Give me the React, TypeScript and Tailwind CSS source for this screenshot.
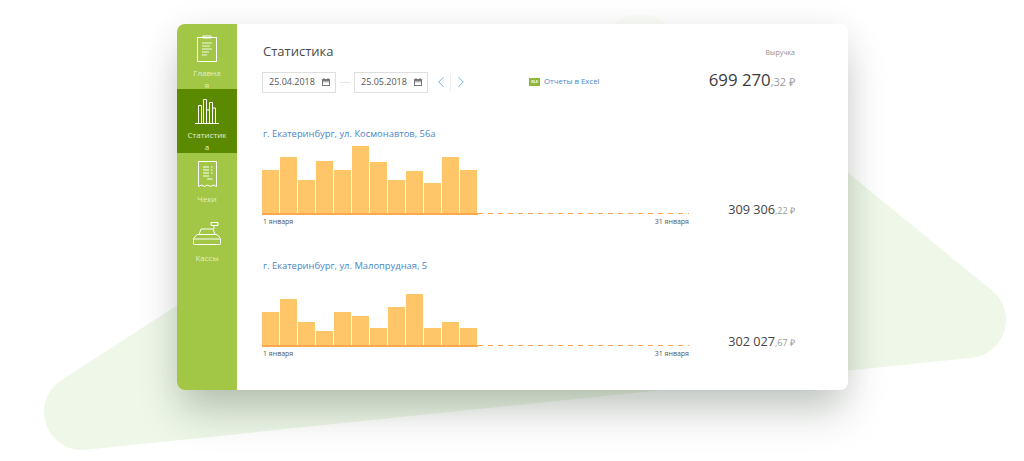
import { ChevronLeft, ChevronRight } from "lucide-react";

const FIRST = [43, 56, 33, 52, 43, 67, 51, 33, 42, 30, 56, 43];
const SECOND = [33, 46, 23, 14, 33, 29, 17, 38, 51, 17, 23, 17];

const ClipboardIcon = () => (
  <svg width="20" height="27" viewBox="0 0 20 27" fill="none" stroke="#fff" strokeWidth="1">
    <rect x="0.5" y="2.5" width="19" height="24" />
    <path d="M6 2.5V1h8v1.5M6 3h8" />
    <path d="M5 8h10M5 11h8M5 14h10M5 17h7M5 20h5" strokeWidth="1.2" opacity="0.85" />
  </svg>
);

const ChartIcon = () => (
  <svg width="24" height="26" viewBox="0 0 24 26" fill="none" stroke="#fff" strokeWidth="1">
    <path d="M0 25.5h24" />
    <path d="M3.5 25V7.5h3V25M8.5 25V1.5h3V25M11.500 25V12h3V25M14.500 25V4.500h3V25M17.500 25V10h3V25" />
  </svg>
);

const ReceiptIcon = () => (
  <svg width="19" height="27" viewBox="0 0 19 27" fill="none" stroke="#fff" strokeWidth="1">
    <path d="M0.500 0.500h18v25l-3-1.500-3 1.500-3-1.500-3 1.500-3-1.500-3 1.500z" />
    <path d="M5 6h6M5 9h6M5 12h6M5 15h6M13 6h1.500M13 9h1.500M13 12h1.500M9 18h5.500" strokeWidth="1.200" />
  </svg>
);

const RegisterIcon = () => (
  <svg width="28" height="23" viewBox="0 0 28 23" fill="none" stroke="#fff" strokeWidth="1">
    <path d="M1.500 22.500h25a1 1 0 0 0 1-1v-5l-3.500-4h-20l-3.500 4v5a1 1 0 0 0 1 1z" />
    <path d="M0.500 17h27" />
    <path d="M6 12.500l2-5.500h12l2 5.500" />
    <path d="M21 7V3.500M18 0.500h7v3h-7z" />
  </svg>
);

const CalendarIcon = () => (
  <svg width="8" height="8" viewBox="0 0 8 8" fill="#777">
    <path d="M0 1h1.500V0h1v1h3V0h1v1H8v7H0zM1 3v4h6V3z" />
    <path d="M1 3h6v1.500H1z" opacity="0.5" />
  </svg>
);

const DateField = ({ value }: { value: string }) => (
  <div className="flex h-[21px] w-[74px] items-center justify-between border border-[#dedede] pl-[6px] pr-[5px] text-[9px] text-[#555555]">
    <span>{value}</span>
    <CalendarIcon />
  </div>
);

const NavItem = ({
  label,
  icon,
  active,
  className,
}: {
  label: string;
  icon: React.ReactNode;
  active?: boolean;
  className: string;
}) => (
  <div
    className={`flex w-full flex-col items-center text-center text-[8px] leading-[12px] ${className} ${
      active ? "bg-[#5b8a00] text-[#e8f0d8]" : "text-[#e3efc4]"
    }`}
  >
    <div className="flex items-end">{icon}</div>
    <div className="mt-[5px] whitespace-pre-line">{label}</div>
  </div>
);

const Sales = ({
  title,
  bars,
  whole,
  cents,
  className,
}: {
  title: string;
  bars: number[];
  whole: string;
  cents: string;
  className: string;
}) => (
  <div className={className}>
    <div className="pl-px text-[9.400px] leading-[14px] text-[#4a86c8]">{title}</div>
    <div className="mt-[5px] flex items-end">
      <div className="w-[427px]">
        <div className="flex h-[67px] items-end gap-px">
          {bars.map((h, i) => (
            <div key={i} className="w-[17px] bg-[#ffc669]" style={{ height: h }} />
          ))}
        </div>
        <div className="flex h-[2px] items-start">
          <div className="h-[2px] w-[216px] bg-[#f9a94a]" />
          <div className="h-px w-[211px] bg-[repeating-linear-gradient(90deg,#f5a55a_0,#f5a55a_5px,transparent_5px,transparent_10px)]" />
        </div>
        <div className="mt-px flex justify-between pl-px text-[7px] leading-[12px] text-[#555555]">
          <span>1 января</span>
          <span>31 января</span>
        </div>
      </div>
      <div className="mb-[7px] flex-1 text-right text-[12.700px] leading-[20px] text-[#444444]">
        {whole}
        <span className="text-[9px] text-[#9a9a9a]">,{cents} ₽</span>
      </div>
    </div>
  </div>
);

export default function App() {
  return (
    <div className="relative h-[461px] w-[1024px] overflow-hidden bg-white font-['Open_Sans',sans-serif]">
      <svg className="absolute left-0 top-0" width="1024" height="461" viewBox="0 0 1024 461">
        <defs>
          <linearGradient id="fade" gradientUnits="userSpaceOnUse" x1="0" y1="14" x2="0" y2="170">
            <stop offset="0" stopColor="#fbfdf9" />
            <stop offset="1" stopColor="#eef7e8" />
          </linearGradient>
        </defs>
        <polygon
          points="82,412 968,320 640,52"
          fill="url(#fade)"
          stroke="url(#fade)"
          strokeWidth="76"
          strokeLinejoin="round"
        />
      </svg>

      <div className="relative pl-[177px] pt-[24px]">
        <div className="flex h-[366px] w-[671px] overflow-hidden rounded-[8px] bg-white shadow-[0_24px_40px_-4px_rgba(30,50,30,0.26),0_0_36px_rgba(0,0,0,0.05)]">
          <aside className="flex w-[60px] shrink-0 flex-col bg-[#a2c747]">
            <NavItem label={"Главна\nя"} icon={<ClipboardIcon />} className="h-[65px] pt-[11px]" />
            <NavItem label={"Статистик\nа"} icon={<ChartIcon />} active className="h-[64px] pt-[9px]" />
            <NavItem label="Чеки" icon={<ReceiptIcon />} className="h-[66px] pt-[8px]" />
            <NavItem
              label="Кассы"
              icon={
                <div className="pb-[2px]">
                  <RegisterIcon />
                </div>
              }
              className="pt-[3px]"
            />
          </aside>

          <main className="flex-1 pl-[25px] pr-[53px] pt-[18px]">
            <div className="flex items-start justify-between">
              <h1 className="pl-px text-[13px] leading-[18px] text-[#4a4a4a]">Статистика</h1>
              <div className="mt-[6px] text-[7px] leading-[10px] text-[#8f8f8f]">Выручка</div>
            </div>

            <div className="mt-[11px] flex h-[22px] items-center">
              <DateField value="25.04.2018" />
              <div className="mx-[4px] h-px w-[10px] bg-[#e4e4e4]" />
              <DateField value="25.05.2018" />
              <ChevronLeft className="ml-[4px] text-[#6aa5dd]" size={18} strokeWidth={1.2} />
              <div className="h-[17px] w-px bg-[#eeeeee]" />
              <ChevronRight className="ml-px text-[#6aa5dd]" size={18} strokeWidth={1.2} />
              <div className="ml-[59px] flex h-[8px] w-[11px] items-center justify-center bg-[#8fb83a] text-[4px] font-bold text-white">
                XLS
              </div>
              <span className="ml-[4px] text-[7.800px] text-[#4a86c8]">Отчеты в Excel</span>
              <div className="mb-[3px] ml-auto text-[16.800px] leading-[24px] text-[#3b3b3b]">
                699 270
                <span className="text-[11px] text-[#9a9a9a]">,32 ₽</span>
              </div>
            </div>

            <Sales
              className="mt-[34px]"
              title="г. Екатеринбург, ул. Космонавтов, 56а"
              bars={FIRST}
              whole="309 306"
              cents="22"
            />
            <Sales
              className="mt-[31px]"
              title="г. Екатеринбург, ул. Малопрудная, 5"
              bars={SECOND}
              whole="302 027"
              cents="67"
            />
          </main>
        </div>
      </div>
    </div>
  );
}
